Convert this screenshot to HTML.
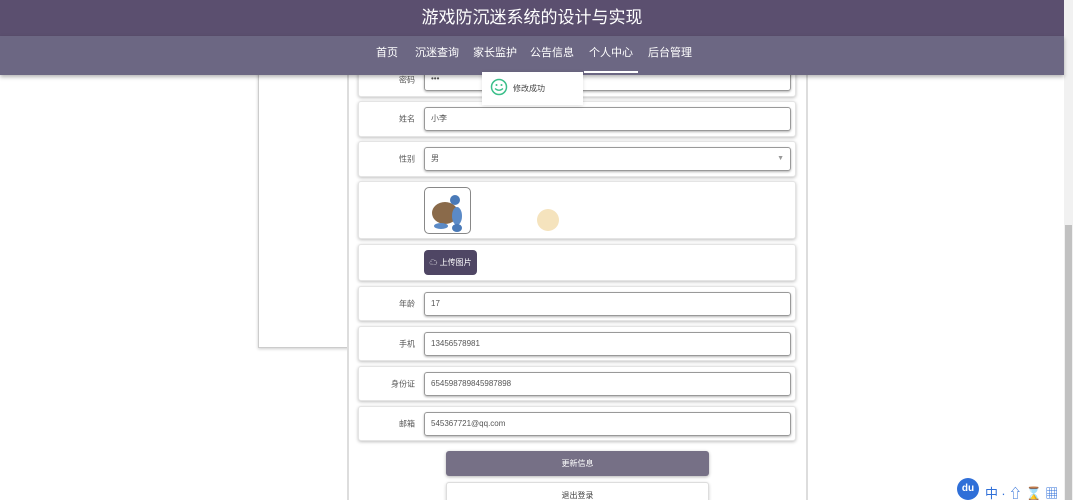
<!DOCTYPE html>
<html style="width:1073px;height:500px;overflow:hidden"><head><meta charset="utf-8"><style>
*{margin:0;padding:0;box-sizing:border-box}
body{width:1073px;height:500px;overflow:hidden;background:#fff;font-family:"Liberation Sans","Noto Sans CJK SC",sans-serif;position:relative}
.hdr{position:absolute;left:0;top:0;width:1064px;height:36px;background:#5b4f6f;color:#fff;font-size:17px;text-align:center;line-height:36px}
.nav{position:absolute;left:0;top:36px;width:1064px;height:39px;background:#6c6783;box-shadow:0 2px 4px rgba(0,0,0,.3);z-index:5}
.nav span{position:absolute;top:0;line-height:34px;font-size:11px;color:#fff}
.nav .act{border-bottom:2px solid #fff;height:37px}
.sb{position:absolute;left:1064px;top:0;width:9px;height:500px;background:#f1f1f1}
.sb i{position:absolute;left:1px;top:225px;width:7px;height:275px;background:#c1c1c1}
.left{position:absolute;left:258px;top:60px;width:92px;height:288px;border:1px solid #ccc;border-top:none;box-shadow:0 1px 3px rgba(0,0,0,.2)}
.card{position:absolute;left:347px;top:60px;width:461px;height:440px;border-left:2px solid #ddd;border-right:2px solid #ddd;background:#fff}
.row{position:absolute;left:358px;width:438px;border:1px solid #e4e4e4;border-radius:3px;box-shadow:0 1px 3px rgba(0,0,0,.25);background:#fff}
.row label{position:absolute;right:380px;font-size:8px;color:#555;top:50%;transform:translateY(-50%)}
.row .in{position:absolute;left:65px;width:367px;height:24px;top:50%;transform:translateY(-50%);border:1px solid #999;border-radius:3px;box-shadow:0 1px 2px rgba(0,0,0,.3);font-size:8px;color:#555;line-height:22px;padding-left:6px}
.toast{position:absolute;left:482px;top:72px;width:101px;height:33px;background:#fff;box-shadow:0 1px 4px rgba(0,0,0,.12);z-index:6;font-size:8px;color:#444}
.btn1{position:absolute;left:446px;top:451px;width:263px;height:25px;background:#767086;border-radius:3px;color:#fff;font-size:8px;text-align:center;line-height:25px;box-shadow:0 1px 3px rgba(0,0,0,.3)}
.btn2{position:absolute;left:446px;top:482px;width:263px;height:25px;background:#fff;border:1px solid #ddd;border-radius:3px;color:#444;font-size:8px;text-align:center;line-height:25px;box-shadow:0 1px 3px rgba(0,0,0,.2)}
</style></head><body>
<div class="left"></div>
<div class="card"></div>
<div class="row" style="top:62px;height:35px"><label>密码</label><div class="in" style="top:auto;bottom:5px;transform:none">•••</div></div>
<div class="row" style="top:101px;height:36px"><label>姓名</label><div class="in">小李</div></div>
<div class="row" style="top:141px;height:36px"><label>性别</label><div class="in">男<span style="position:absolute;right:6px;color:#999;font-size:7px">▼</span></div></div>
<div class="row" style="top:181px;height:58px">
<div style="position:absolute;left:65px;top:5px;width:47px;height:47px;border:1px solid #888;border-radius:5px;overflow:hidden;background:#fff">
<svg width="47" height="47"><ellipse cx="20" cy="25" rx="13" ry="11" fill="#8a6a4a"/><circle cx="30" cy="12" r="5" fill="#4a7ab8"/><ellipse cx="32" cy="28" rx="5" ry="9" fill="#5b8ac6"/><ellipse cx="16" cy="38" rx="7" ry="3" fill="#5b8ac6"/><ellipse cx="32" cy="40" rx="5" ry="4" fill="#4a7ab8"/></svg></div>
<div style="position:absolute;left:178px;top:27px;width:22px;height:22px;border-radius:50%;background:#f5e3bd"></div>
</div>
<div class="row" style="top:244px;height:37px"><div style="position:absolute;left:65px;top:5px;width:53px;height:25px;background:#4f4664;border-radius:4px;color:#fff;font-size:8px;line-height:25px;text-align:center">☁ 上传图片</div></div>
<div class="row" style="top:286px;height:35px"><label>年龄</label><div class="in">17</div></div>
<div class="row" style="top:326px;height:35px"><label>手机</label><div class="in">13456578981</div></div>
<div class="row" style="top:366px;height:35px"><label>身份证</label><div class="in">654598789845987898</div></div>
<div class="row" style="top:406px;height:35px"><label>邮箱</label><div class="in">545367721@qq.com</div></div>
<div class="btn1">更新信息</div>
<div class="btn2">退出登录</div>
<div class="hdr">游戏防沉迷系统的设计与实现</div>
<div class="nav">
<span style="left:376px">首页</span><span style="left:415px">沉迷查询</span><span style="left:473px">家长监护</span><span style="left:530px">公告信息</span><span class="act" style="left:584px;padding:0 5px">个人中心</span><span style="left:648px">后台管理</span>
</div>
<div class="toast"><svg style="position:absolute;left:8px;top:6px" width="18" height="18"><circle cx="9" cy="9" r="7.5" fill="none" stroke="#3bbf8a" stroke-width="1.5"/><circle cx="6.5" cy="7" r="1" fill="#3bbf8a"/><circle cx="11.5" cy="7" r="1" fill="#3bbf8a"/><path d="M5 10.5 Q9 14 13 10.5" fill="none" stroke="#3bbf8a" stroke-width="1.3"/></svg><span style="position:absolute;left:31px;top:11px">修改成功</span></div>
<div class="sb"><i></i></div>
<div style="position:absolute;left:957px;top:478px;width:22px;height:22px;border-radius:50%;background:#2f6fd8;color:#fff;font-size:10px;text-align:center;line-height:22px;font-weight:bold">du</div>
<div style="position:absolute;left:985px;top:483px;font-size:13px;color:#2f6fd8">中 ∙ ⇧ ⌛ ▦</div>
</body></html>
